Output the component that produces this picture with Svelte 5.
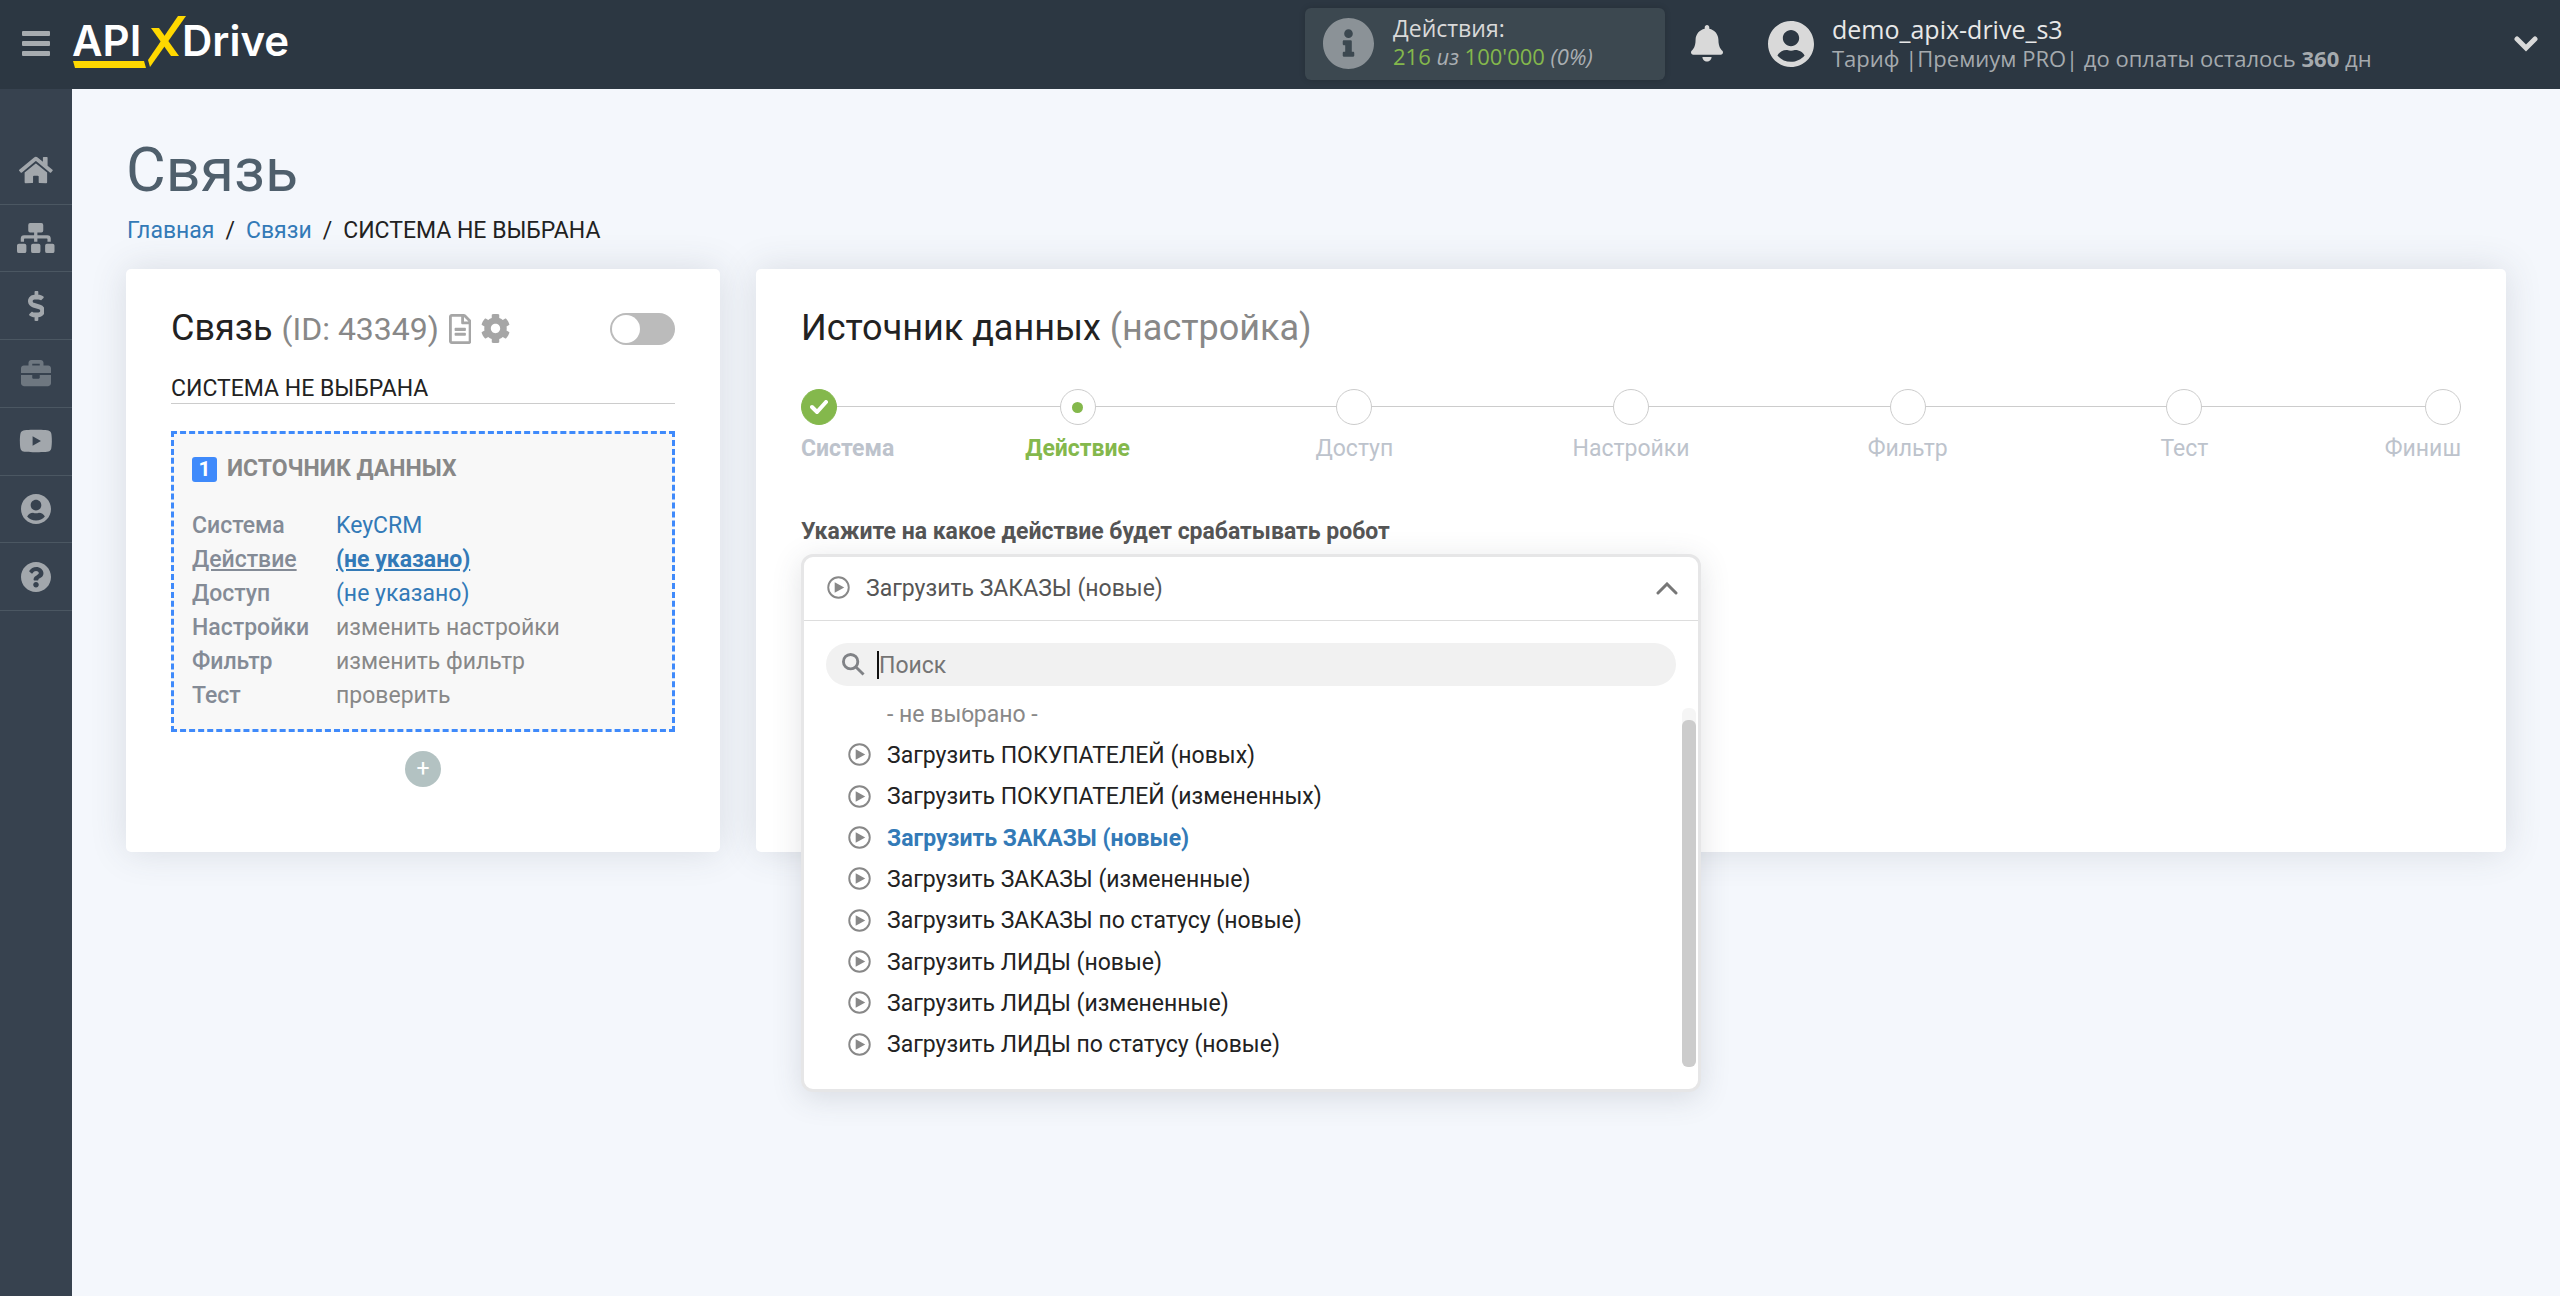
<script lang="ts">
	type Icon = { box: string; path: string };

	const icons: Record<string, Icon> = {
		home: {
			box: "0 0 576 512",
			path: "M280.37 148.26L96 300.11V464a16 16 0 0 0 16 16l112.06-.29a16 16 0 0 0 15.92-16V368a16 16 0 0 1 16-16h64a16 16 0 0 1 16 16v95.64a16 16 0 0 0 16 16.05L464 480a16 16 0 0 0 16-16V300L295.67 148.26a12.19 12.19 0 0 0-15.3 0zM571.6 251.47L488 182.56V44.05a12 12 0 0 0-12-12h-56a12 12 0 0 0-12 12v72.61L318.47 43a48 48 0 0 0-61 0L4.34 251.47a12 12 0 0 0-1.6 16.9l25.5 31A12 12 0 0 0 45.15 301l235.22-193.74a12.19 12.19 0 0 1 15.3 0L530.9 301a12 12 0 0 0 16.9-1.6l25.5-31a12 12 0 0 0-1.7-16.93z"
		},
		sitemap: {
			box: "0 0 640 512",
			path: "M224 0h192a32 32 0 0 1 32 32v96a32 32 0 0 1-32 32h-68v48h170a58 58 0 0 1 58 58v54h-56v-48a8 8 0 0 0-8-8H348v56h-56v-56H128a8 8 0 0 0-8 8v48H64v-54a58 58 0 0 1 58-58h170v-48h-68a32 32 0 0 1-32-32V32a32 32 0 0 1 32-32zM32 352h96a32 32 0 0 1 32 32v96a32 32 0 0 1-32 32H32a32 32 0 0 1-32-32v-96a32 32 0 0 1 32-32zM272 352h96a32 32 0 0 1 32 32v96a32 32 0 0 1-32 32h-96a32 32 0 0 1-32-32v-96a32 32 0 0 1 32-32zM512 352h96a32 32 0 0 1 32 32v96a32 32 0 0 1-32 32h-96a32 32 0 0 1-32-32v-96a32 32 0 0 1 32-32z"
		},
		dollar: {
			box: "0 0 288 512",
			path: "M209.2 233.4l-108-31.6C88.7 198.2 80 186.5 80 173.5c0-16.3 13.2-29.5 29.5-29.5h66.3c12.2 0 24.2 3.7 34.2 10.5 6.1 4.1 14.3 3.1 19.5-2l34.8-34c7.1-6.9 6.1-18.4-1.8-24.5C238 74.8 207.4 64.1 176 64V16c0-8.8-7.2-16-16-16h-32c-8.8 0-16 7.2-16 16v48h-2.5C45.8 64-5.4 118.7.5 183.6c4.2 46.1 39.4 83.6 83.8 96.6l102.5 30c12.5 3.7 21.2 15.3 21.2 28.3 0 16.3-13.2 29.5-29.5 29.5h-66.3C100 368 88 364.3 78 357.5c-6.1-4.1-14.3-3.1-19.5 2l-34.8 34c-7.1 6.9-6.1 18.4 1.8 24.5 24.5 19.2 55.1 29.9 86.5 30v48c0 8.8 7.2 16 16 16h32c8.8 0 16-7.2 16-16v-48.2c46.6-.9 90.3-28.6 105.7-72.7 21.5-61.6-14.6-124.8-72.5-141.7z"
		},
		briefcase: {
			box: "0 0 512 512",
			path: "M320 336c0 8.84-7.16 16-16 16h-96c-8.84 0-16-7.16-16-16v-48H0v144c0 25.6 22.4 48 48 48h416c25.6 0 48-22.4 48-48V288H320v48zm144-208h-80V80c0-25.6-22.4-48-48-48H176c-25.6 0-48 22.4-48 48v48H48c-25.6 0-48 22.4-48 48v80h512v-80c0-25.6-22.4-48-48-48zm-144 0H192V96h128v32z"
		},
		youtube: {
			box: "0 0 576 512",
			path: "M549.655 124.083c-6.281-23.65-24.787-42.276-48.284-48.597C458.781 64 288 64 288 64S117.22 64 74.629 75.486c-23.497 6.322-42.003 24.947-48.284 48.597-11.412 42.867-11.412 132.305-11.412 132.305s0 89.438 11.412 132.305c6.281 23.65 24.787 41.5 48.284 47.821C117.22 448 288 448 288 448s170.78 0 213.371-11.486c23.497-6.321 42.003-24.171 48.284-47.821 11.412-42.867 11.412-132.305 11.412-132.305s0-89.438-11.412-132.305zm-317.51 213.508V175.185l142.739 81.205-142.739 81.201z"
		},
		user: {
			box: "0 8 496 496",
			path: "M248 8C111 8 0 119 0 256s111 248 248 248 248-111 248-248S385 8 248 8zm0 96c48.6 0 88 39.4 88 88s-39.4 88-88 88-88-39.4-88-88 39.4-88 88-88zm0 344c-58.7 0-111.3-26.6-146.5-68.2 18.8-35.4 55.6-59.8 98.5-59.8 2.4 0 4.8.4 7.1 1.1 13 4.2 26.6 6.9 40.9 6.9 14.3 0 28-2.7 40.9-6.9 2.3-.7 4.7-1.1 7.1-1.1 42.9 0 79.7 24.4 98.5 59.8C359.3 421.4 306.7 448 248 448z"
		},
		question: {
			box: "8 8 496 496",
			path: "M504 256c0 136.997-111.043 248-248 248S8 392.997 8 256C8 119.083 119.043 8 256 8s248 111.083 248 248zM262.655 90c-54.497 0-89.255 22.957-116.549 63.758-3.536 5.286-2.353 12.415 2.715 16.258l34.699 26.31c5.205 3.947 12.621 3.008 16.665-2.122 17.864-22.658 30.113-35.797 57.303-35.797 20.429 0 45.698 13.148 45.698 32.958 0 14.976-12.363 22.667-32.534 33.976C247.128 238.528 216 254.941 216 296v4c0 6.627 5.373 12 12 12h56c6.627 0 12-5.373 12-12v-1.333c0-28.462 83.186-29.647 83.186-106.667 0-58.002-60.165-102-116.531-102zM256 338c-25.365 0-46 20.635-46 46 0 25.364 20.635 46 46 46s46-20.636 46-46c0-25.365-20.635-46-46-46z"
		},
		info: {
			box: "8 8 496 496",
			path: "M256 8C119.043 8 8 119.083 8 256c0 136.997 111.043 248 248 248s248-111.003 248-248C504 119.083 392.957 8 256 8zm0 110c23.196 0 42 18.804 42 42s-18.804 42-42 42-42-18.804-42-42 18.804-42 42-42zm56 254c0 6.627-5.373 12-12 12h-88c-6.627 0-12-5.373-12-12v-24c0-6.627 5.373-12 12-12h12v-64h-12c-6.627 0-12-5.373-12-12v-24c0-6.627 5.373-12 12-12h64c6.627 0 12 5.373 12 12v100h12c6.627 0 12 5.373 12 12v24z"
		},
		bell: {
			box: "0 0 448 512",
			path: "M224 512c35.32 0 63.97-28.65 63.97-64H160.03c0 35.35 28.65 64 63.97 64zm215.39-149.71c-19.32-20.76-55.47-51.99-55.47-154.29 0-77.7-54.48-139.9-127.94-155.16V32c0-17.67-14.32-32-31.98-32s-31.98 14.33-31.98 32v20.84C118.56 68.1 64.08 130.3 64.08 208c0 102.3-36.15 133.53-55.47 154.29-6 6.45-8.66 14.16-8.61 21.71.11 16.4 12.98 32 32.1 32h383.8c19.12 0 32-15.6 32.1-32 .05-7.55-2.61-15.27-8.61-21.71z"
		},
		file: {
			box: "0 0 384 512",
			path: "M288 248v28c0 6.6-5.4 12-12 12H108c-6.6 0-12-5.4-12-12v-28c0-6.6 5.4-12 12-12h168c6.6 0 12 5.4 12 12zm-12 72H108c-6.6 0-12 5.4-12 12v28c0 6.6 5.4 12 12 12h168c6.6 0 12-5.4 12-12v-28c0-6.6-5.4-12-12-12zm108-188.1V464c0 26.5-21.5 48-48 48H48c-26.5 0-48-21.5-48-48V48C0 21.5 21.5 0 48 0h204.1C264.8 0 277 5.1 286 14.1L369.9 98c9 8.9 14.1 21.2 14.1 33.9zm-128-80V128h76.1L256 51.9zM336 464V176H232c-13.3 0-24-10.7-24-24V48H48v416h288z"
		},
		cog: {
			box: "8 8 496 496",
			path: "M487.4 315.7l-42.6-24.6c4.3-23.2 4.3-47 0-70.2l42.6-24.6c4.9-2.8 7.1-8.6 5.5-14-11.1-35.6-30-67.8-54.7-94.6-3.8-4.1-10-5.1-14.8-2.3L380.8 110c-17.9-15.4-38.5-27.3-60.8-35.1V25.8c0-5.6-3.9-10.5-9.4-11.7-36.7-8.2-74.3-7.8-109.2 0-5.5 1.2-9.4 6.1-9.4 11.7V75c-22.2 7.9-42.8 19.8-60.8 35.1L88.7 85.5c-4.9-2.8-11-1.9-14.8 2.3-24.7 26.7-43.6 58.9-54.7 94.6-1.7 5.4.6 11.2 5.5 14L67.3 221c-4.3 23.2-4.3 47 0 70.2l-42.6 24.6c-4.9 2.8-7.1 8.6-5.5 14 11.1 35.6 30 67.8 54.7 94.6 3.8 4.1 10 5.1 14.8 2.3l42.6-24.6c17.9 15.4 38.5 27.3 60.8 35.1v49.2c0 5.6 3.9 10.5 9.4 11.7 36.7 8.2 74.3 7.8 109.2 0 5.5-1.2 9.4-6.1 9.4-11.7v-49.2c22.2-7.9 42.8-19.8 60.8-35.1l42.6 24.6c4.9 2.8 11 1.9 14.8-2.3 24.7-26.7 43.6-58.9 54.7-94.6 1.5-5.5-.7-11.3-5.6-14.1zM256 336c-44.1 0-80-35.9-80-80s35.9-80 80-80 80 35.9 80 80-35.9 80-80 80z"
		}
	};

	const nav = [
		{ icon: "home", label: "Главная" },
		{ icon: "sitemap", label: "Связи" },
		{ icon: "dollar", label: "Оплата" },
		{ icon: "briefcase", label: "Проекты" },
		{ icon: "youtube", label: "Видео" },
		{ icon: "user", label: "Профиль" },
		{ icon: "question", label: "Помощь" }
	];

	const settings = [
		{ name: "Система", value: "KeyCRM", link: true },
		{ name: "Действие", value: "(не указано)", link: true, current: true },
		{ name: "Доступ", value: "(не указано)", link: true },
		{ name: "Настройки", value: "изменить настройки" },
		{ name: "Фильтр", value: "изменить фильтр" },
		{ name: "Тест", value: "проверить" }
	];

	const steps = [
		{ name: "Система", state: "done" },
		{ name: "Действие", state: "active" },
		{ name: "Доступ", state: "" },
		{ name: "Настройки", state: "" },
		{ name: "Фильтр", state: "" },
		{ name: "Тест", state: "" },
		{ name: "Финиш", state: "" }
	];

	const actions = [
		"Загрузить ПОКУПАТЕЛЕЙ (новых)",
		"Загрузить ПОКУПАТЕЛЕЙ (измененных)",
		"Загрузить ЗАКАЗЫ (новые)",
		"Загрузить ЗАКАЗЫ (измененные)",
		"Загрузить ЗАКАЗЫ по статусу (новые)",
		"Загрузить ЛИДЫ (новые)",
		"Загрузить ЛИДЫ (измененные)",
		"Загрузить ЛИДЫ по статусу (новые)"
	];

	let selected = $state("Загрузить ЗАКАЗЫ (новые)");
	let open = $state(true);
	let search = $state("");
	let enabled = $state(false);
</script>

{#snippet icon(name: string)}
	<svg class="icon icon--{name}" viewBox={icons[name].box} aria-hidden="true">
		<path d={icons[name].path} />
	</svg>
{/snippet}

{#snippet play()}
	<svg class="play" viewBox="0 0 24 24" aria-hidden="true">
		<circle cx="12" cy="12" r="10.7" />
		<path d="M8 6.5v11L18 12z" />
	</svg>
{/snippet}

<header>
	<button class="bars" aria-label="Меню">
		<svg viewBox="0 0 28 25" aria-hidden="true">
			<rect width="28" height="5" rx="1" />
			<rect y="10" width="28" height="5" rx="1" />
			<rect y="20" width="28" height="5" rx="1" />
		</svg>
	</button>
	<a class="logo" href="#home" aria-label="APIXDrive">
		<svg viewBox="0 0 222 56" aria-hidden="true">
			<text x="-1" y="42">API</text>
			<text x="109" y="42">Drive</text>
			<path d="M78 14h8l20 28h-8z" />
			<path d="M105 2h8L77 53l-2-7z" />
			<path d="M0 47h71l2 7H2z" />
		</svg>
	</a>
	<div class="usage">
		{@render icon("info")}
		<div class="usage-text">
			<div class="usage-title">Действия:</div>
			<div class="usage-count"><b>216</b> <i>из</i> <b>100'000</b> <i>(0%)</i></div>
		</div>
	</div>
	<button class="notify" aria-label="Уведомления">{@render icon("bell")}</button>
	<div class="account">
		{@render icon("user")}
		<div>
			<div class="account-name">demo_apix-drive_s3</div>
			<div class="account-plan">
				Тариф |Премиум PRO| до оплаты осталось <strong>360</strong> дн
			</div>
		</div>
	</div>
	<button class="more" aria-label="Меню профиля">
		<svg viewBox="0 0 24 16" aria-hidden="true"><path d="M3 3l9 9 9-9" /></svg>
	</button>
</header>

<div class="page">
	<nav>
		<div class="nav-list">
			{#each nav as item (item.icon)}
				<a href="#{item.icon}" aria-label={item.label}>{@render icon(item.icon)}</a>
			{/each}
		</div>
	</nav>

	<main>
		<h1>Связь</h1>
		<div class="breadcrumbs">
			<a href="#home">Главная</a><span>/</span><a href="#sitemap">Связи</a><span>/</span>СИСТЕМА НЕ
			ВЫБРАНА
		</div>

		<div class="cards">
			<section class="card">
				<div class="card-head">
					<h2>Связь <small>(ID: 43349)</small></h2>
					<button class="tool" aria-label="Лог">{@render icon("file")}</button>
					<button class="tool" aria-label="Настройки связи">{@render icon("cog")}</button>
					<input type="checkbox" class="switch" aria-label="Включить связь" bind:checked={enabled} />
				</div>
				<div class="system">СИСТЕМА НЕ ВЫБРАНА</div>

				<div class="source">
					<h3><span class="badge">1</span>ИСТОЧНИК ДАННЫХ</h3>
					<dl>
						{#each settings as row (row.name)}
							<dt class:current={row.current}>{row.name}</dt>
							<dd class:current={row.current}>
								{#if row.link}<a href="#step">{row.value}</a>{:else}{row.value}{/if}
							</dd>
						{/each}
					</dl>
				</div>
				<button class="add" aria-label="Добавить">+</button>
			</section>

			<section class="card">
				<h2>Источник данных <small>(настройка)</small></h2>
				<ol class="steps">
					{#each steps as step (step.name)}
						<li class={step.state}>
							<span class="dot">
								{#if step.state === "done"}
									<svg viewBox="0 0 18 14" aria-hidden="true"><path d="M2 7l5 5 9-10" /></svg>
								{/if}
							</span>
							{step.name}
						</li>
					{/each}
				</ol>

				<div class="field-label" id="action-label">Укажите на какое действие будет срабатывать робот</div>
				<div class="select">
					<div class="select-box">
						<button
							class="select-value"
							aria-labelledby="action-label"
							aria-expanded={open}
							onclick={() => (open = !open)}
						>
							{@render play()}
							<span>{selected}</span>
							<svg class="arrow" viewBox="0 1 22 14" aria-hidden="true"><path d="M2 12l9-9 9 9" /></svg>
						</button>
						{#if open}
							<div class="search">
								<svg viewBox="0 0 24 24" aria-hidden="true">
									<circle cx="9" cy="9" r="7.5" />
									<path d="M14.5 14.5l8 8" />
								</svg>
								<span class="caret"></span>
								<input type="text" placeholder="Поиск" aria-label="Поиск" bind:value={search} />
							</div>
							<div class="viewport">
								<ul role="listbox" aria-labelledby="action-label">
									<li class="empty" role="option" aria-selected="false">- не выбрано -</li>
									{#each actions as action (action)}
										<li role="option" aria-selected={action === selected}>
											<button
												class:chosen={action === selected}
												onclick={() => (selected = action)}
											>
												{@render play()}
												{action}
											</button>
										</li>
									{/each}
								</ul>
								<div class="scrollbar"></div>
							</div>
						{/if}
					</div>
				</div>
			</section>
		</div>
	</main>
</div>

<style>
	:global(body) {
		background: #f4f7fc;
		color: #222;
		font: 23px/30px Roboto, sans-serif;
	}

	:global(#app) {
		display: flex;
		flex-direction: column;
		min-height: 100vh;
	}

	button {
		padding: 0;
		border: 0;
		background: none;
		color: inherit;
		font: inherit;
		cursor: pointer;
	}

	a {
		color: #337ab7;
		text-decoration: none;
	}

	h1,
	h2,
	h3,
	ol,
	ul,
	dl,
	dd {
		margin: 0;
		padding: 0;
		list-style: none;
	}

	svg {
		display: block;
		flex: none;
	}

	.icon {
		fill: currentColor;
	}

	header {
		display: flex;
		align-items: center;
		box-sizing: border-box;
		height: 89px;
		padding: 0 22px 2px;
		background: #2c3742;
		color: #d9d9d9;
		font-family: "Open Sans", sans-serif;
	}

	.bars svg {
		width: 28px;
		fill: #a6abaf;
	}

	.logo {
		margin: 0 auto 3px 23px;
	}

	.logo svg {
		width: 222px;
		height: 56px;
		overflow: visible;
		fill: #ffd800;
	}

	.logo text {
		fill: #fff;
		font: 600 42px Inter, sans-serif;
	}

	.usage {
		display: flex;
		align-items: center;
		gap: 19px;
		box-sizing: border-box;
		width: 360px;
		height: 72px;
		padding: 0 18px;
		border-radius: 6px;
		background: #3c4850;
		box-shadow: 0 0 6px rgba(0, 0, 0, 0.15);
	}

	.usage .icon {
		width: 51px;
		color: #8b9297;
	}

	.usage-text {
		padding-bottom: 4px;
	}

	.usage-title,
	.usage-count {
		font-size: 22px;
		line-height: 28px;
	}

	.usage-title {
		font-size: 23px;
	}

	.usage-count b {
		color: #84b84c;
		font-weight: 400;
	}

	.usage-count i {
		color: #aaafb3;
	}

	.notify {
		margin: 0 45px 0 26px;
	}

	.notify .icon {
		width: 32px;
	}

	.account {
		display: flex;
		align-items: center;
		gap: 18px;
		width: 746px;
	}

	.account .icon {
		width: 46px;
	}

	.account-name {
		color: #e8e8e8;
		font-size: 25px;
		line-height: 29px;
	}

	.account-plan {
		color: #a5aaae;
		font-size: 22px;
		line-height: 29px;
	}

	.more svg {
		width: 24px;
		fill: none;
		stroke: currentColor;
		stroke-width: 5;
		stroke-linecap: round;
	}

	.page {
		display: flex;
		flex: 1;
	}

	nav {
		flex: none;
		width: 72px;
		padding-top: 48px;
		background: #37424f;
	}

	.nav-list {
		display: grid;
		grid-auto-rows: 1fr;
		height: 474px;
	}

	nav a {
		display: flex;
		align-items: center;
		justify-content: center;
		border-bottom: 1px solid #4b5762;
		color: #a2a7ac;
	}

	nav .icon {
		height: 30px;
	}

	nav .icon--briefcase {
		color: #6e7780;
	}

	main {
		flex: 1;
		min-width: 0;
		padding: 45px 54px;
	}

	h1 {
		color: #4f5f6c;
		font-size: 61px;
		font-weight: 400;
		line-height: 72px;
	}

	.breadcrumbs {
		margin: 10px 0 23px;
		padding-left: 1px;
	}

	.breadcrumbs span {
		margin: 0 11px;
	}

	.cards {
		display: grid;
		grid-template-columns: 594fr 1750fr;
		gap: 36px;
	}

	.card {
		padding: 37px 45px 65px;
		border-radius: 5px;
		background: #fff;
		box-shadow: 0 0 36px rgba(60, 70, 80, 0.15);
	}

	.card-head {
		display: flex;
		align-items: center;
		gap: 10px;
	}

	h2 {
		font-size: 36px;
		font-weight: 400;
		line-height: 44px;
	}

	h2 small {
		color: #888;
		font-size: inherit;
	}

	.card-head small {
		font-size: 32px;
	}

	.tool {
		color: #a6a6a6;
	}

	.icon--file {
		height: 30px;
	}

	.icon--cog {
		height: 29px;
	}

	.switch {
		display: flex;
		align-items: center;
		appearance: none;
		box-sizing: border-box;
		width: 65px;
		height: 32px;
		margin: 0 0 0 auto;
		padding: 2px;
		border-radius: 16px;
		background: #bbb;
		cursor: pointer;
	}

	.switch::before {
		content: "";
		width: 28px;
		height: 28px;
		border-radius: 50%;
		background: #fff;
	}

	.switch:checked {
		justify-content: flex-end;
		background: #84b84c;
	}

	.system {
		box-sizing: border-box;
		height: 30px;
		margin: 23px 0 27px;
		border-bottom: 1px solid #ccc;
	}

	.source {
		padding: 22px 18px 16px;
		border: 3px dashed #3f8afb;
		background: #f8f8f8;
	}

	h3 {
		display: flex;
		align-items: center;
		gap: 10px;
		margin-bottom: 27px;
		color: #888;
		font-size: 23px;
		font-weight: 700;
		line-height: 26px;
	}

	.badge {
		width: 25px;
		height: 25px;
		border-radius: 3px;
		background: #3f8afb;
		color: #fff;
		font-size: 21px;
		line-height: 25px;
		text-align: center;
	}

	dl {
		display: grid;
		grid-template-columns: 144px 1fr;
		grid-auto-rows: 1fr;
		align-items: center;
		height: 204px;
	}

	dt {
		color: #848b96;
		font-weight: 500;
	}

	dd {
		color: #888;
	}

	dd.current {
		font-weight: 700;
	}

	dt.current,
	.current a {
		text-decoration: underline;
	}

	.add {
		display: block;
		width: 36px;
		height: 36px;
		margin: 19px auto 0;
		border-radius: 50%;
		background: #b3c2c2;
		color: #fff;
		line-height: 36px;
	}

	.steps {
		display: flex;
		margin: 39px 0 53px;
		background: linear-gradient(#ccc, #ccc) 0 17px / 100% 1px no-repeat;
		color: #bdc3cc;
	}

	.steps li {
		display: flex;
		flex: 2 0 0;
		flex-direction: column;
		align-items: center;
		gap: 9px;
	}

	.steps li:first-child {
		flex-grow: 1;
		align-items: flex-start;
	}

	.steps li:last-child {
		flex-grow: 1;
		align-items: flex-end;
	}

	.dot {
		display: grid;
		place-items: center;
		box-sizing: border-box;
		width: 36px;
		height: 36px;
		border: 1px solid #ccc;
		border-radius: 50%;
		background: #fff;
	}

	.steps .done,
	.steps .active {
		font-weight: 700;
	}

	.done .dot {
		border-color: #84b84c;
		background: #84b84c;
	}

	.dot svg {
		width: 18px;
		fill: none;
		stroke: #fff;
		stroke-width: 4;
		stroke-linecap: round;
	}

	.active {
		color: #84b84c;
	}

	.active .dot::before {
		content: "";
		width: 11px;
		height: 11px;
		border-radius: 50%;
		background: #84b84c;
	}

	.field-label {
		margin-bottom: 7px;
		color: #555;
		font-weight: 700;
	}

	.select {
		position: relative;
		max-width: 900px;
		height: 69px;
	}

	/* the open list lies over the card and the page below it */
	.select-box {
		position: absolute;
		inset: 0 0 auto;
		border: 3px solid #e6e6e7;
		border-radius: 12px;
		background: #fff;
		box-shadow: 0 6px 30px rgba(60, 70, 80, 0.15);
	}

	.select-value {
		display: flex;
		align-items: center;
		gap: 16px;
		width: 100%;
		height: 64px;
		padding: 0 20px 0 23px;
		border-bottom: 1px solid #ddd;
		color: #555;
		text-align: left;
	}

	.select-value span {
		flex: 1;
	}

	.play {
		width: 23px;
		padding-bottom: 2px;
		fill: #888;
	}

	.play circle {
		fill: none;
		stroke: #888;
		stroke-width: 2;
	}

	.arrow {
		width: 22px;
		fill: none;
		stroke: #777;
		stroke-width: 3;
		stroke-linecap: round;
	}

	.search {
		display: flex;
		align-items: center;
		height: 43px;
		margin: 22px;
		padding: 0 16px;
		border-radius: 22px;
		background: #f1f1f1;
	}

	.search svg {
		width: 23px;
		fill: none;
		stroke: #808286;
		stroke-width: 3;
	}

	.caret {
		width: 2px;
		height: 28px;
		margin-left: 12px;
		background: #111;
	}

	.search input {
		flex: 1;
		min-width: 0;
		padding: 2px 0 0;
		border: 0;
		outline: none;
		background: none;
		color: #222;
		font: inherit;
	}

	.search input::placeholder {
		color: #757575;
		opacity: 1;
	}

	.viewport {
		position: relative;
		display: flex;
		align-items: flex-end;
		height: 359px;
		margin-bottom: 22px;
		overflow: hidden;
	}

	.viewport ul {
		display: grid;
		flex: 1;
		grid-auto-rows: 1fr;
		height: 372px;
		margin-bottom: 1px;
	}

	.viewport li {
		display: flex;
		align-items: center;
		padding-left: 44px;
	}

	.viewport .empty {
		padding-left: 83px;
		color: #888;
	}

	.viewport button {
		display: flex;
		flex: 1;
		align-items: center;
		gap: 16px;
		text-align: left;
	}

	.viewport .chosen {
		color: #337ab7;
		font-weight: 700;
	}

	.scrollbar {
		position: absolute;
		top: 0;
		right: 2px;
		bottom: 0;
		width: 14px;
		border-radius: 6px;
		background: #f5f5f5;
	}

	.scrollbar::before {
		content: "";
		position: absolute;
		inset: 12px 0 0;
		border-radius: 6px;
		background: #ccc;
	}
</style>
